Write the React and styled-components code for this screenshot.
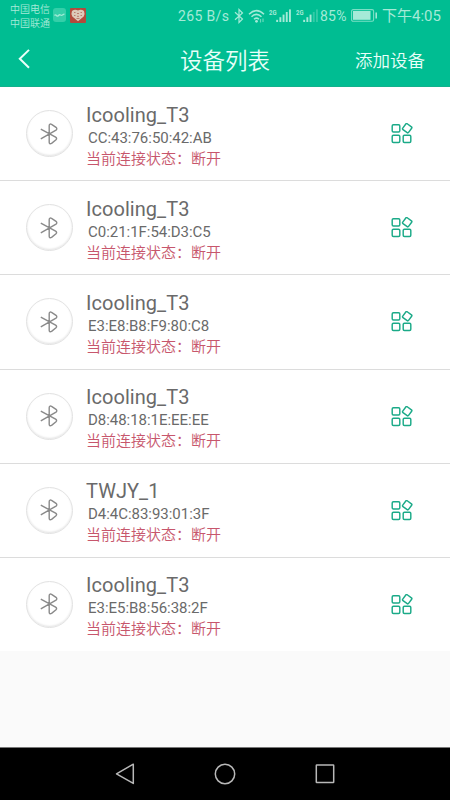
import React from "react";
import styled, { createGlobalStyle } from "styled-components";

const devices = [
    { name: 'Icooling_T3', mac: 'CC:43:76:50:42:AB' },
    { name: 'Icooling_T3', mac: 'C0:21:1F:54:D3:C5' },
    { name: 'Icooling_T3', mac: 'E3:E8:B8:F9:80:C8' },
    { name: 'Icooling_T3', mac: 'D8:48:18:1E:EE:EE' },
    { name: 'TWJY_1', mac: 'D4:4C:83:93:01:3F' },
    { name: 'Icooling_T3', mac: 'E3:E5:B8:56:38:2F' },
]


const Signal = ({ level }) => (

    <svg width="24" height="16" viewBox="0 0 24 16">
        <text x="0" y="6.8" fontSize="8" fontWeight="700" fontFamily="Roboto, sans-serif" textLength="7.5" lengthAdjust="spacingAndGlyphs" fill="#a5ead8">2G</text>
        {[0, 1, 2, 3, 4].map(i => (
            <rect key={i} x={7.2 + i * 3.2} y={11.8 - i * 2.6} width="1.9" height={2.2 + i * 2.6} fill="#a5ead8" opacity={i < level ? 1 : 0.3} />
        ))}
    </svg>

)


const App = () => {

    return (

        <>

            <GlobalStyle />

            <Screen>

                <StatusBar>

                    <Carriers>
                        <span>中国电信</span>
                        <span>中国联通</span>
                    </Carriers>

                    <Notices>
                        <svg width="13" height="14" viewBox="0 0 13 14">
                            <rect width="13" height="14" rx="3" fill="#34cfa9" />
                            <path d="M1.5 7.5q1-1.2 2 0t2 0t2-.5t2 0t2-.8" fill="none" stroke="#a0ead6" strokeWidth="1.3" />
                        </svg>
                        <svg width="16" height="15" viewBox="0 0 16 15">
                            <rect width="16" height="15" rx="1" fill="#b34a3c" />
                            <path d="M8 13.2L2.3 8.6Q.8 5.5 2 3Q4.8.7 8 2.4Q11.2.7 14 3Q15.2 5.5 13.7 8.6Z" fill="#dcc9b9" />
                            <path d="M4 4.5h1.5m1.5 1h2m1.5-1h1.5M4 7.5h1.5m1.5 .8h2m1.5-.8h1.5M6.5 10.5h3" stroke="#b57467" strokeWidth=".9" />
                        </svg>
                    </Notices>

                    <Speed>265 B/s</Speed>

                    <Indicators>
                        <svg width="10" height="16" viewBox="0 0 10 16">
                            <path d="M1 4.3L8.5 11L5 14.5V1.5L8.5 5L1 11.7" fill="none" stroke="#a5ead8" strokeWidth="1.2" />
                        </svg>
                        <svg width="17" height="14" viewBox="0 0 17 14">
                            <path d="M1 5.2Q8.5-2 16 5.2M3.5 7.7Q8.5 3 13.5 7.7M6 10.2Q8.5 8 11 10.2" fill="none" stroke="#a5ead8" strokeWidth="1.5" />
                            <circle cx="8.5" cy="12.3" r="1.4" fill="#a5ead8" />
                            <path d="M12.5 10v3.5M15 9.5v3.5" stroke="#66dabc" strokeWidth="1.2" />
                        </svg>
                    </Indicators>

                    <Signals>
                        <Signal level={5} />
                        <Signal level={3} />
                    </Signals>

                    <Percent>85%</Percent>

                    <Battery>
                        <svg width="27" height="13" viewBox="0 0 27 13">
                            <rect x=".6" y=".6" width="22" height="11.6" rx="1.5" fill="none" stroke="#7adfc5" strokeWidth="1.1" />
                            <rect x="2" y="2" width="17.5" height="8.8" fill="#a5ead8" />
                            <path d="M25.2 3.5v6" stroke="#a5ead8" strokeWidth="1.5" />
                        </svg>
                    </Battery>

                    <Clock>下午4:05</Clock>

                </StatusBar>

                <Header>

                    <BackButton aria-label="返回">
                        <svg width="12" height="20" viewBox="0 0 12 20">
                            <path d="M11 .9L1.8 9.7L11 18.8" fill="none" stroke="#e9fff9" strokeWidth="2" />
                        </svg>
                    </BackButton>

                    <Title>设备列表</Title>

                    <AddButton>添加设备</AddButton>

                </Header>

                <List>

                    {

                        devices.map((device, index) => (

                            <Row key={index}>

                                <Round>
                                    <svg width="18" height="22" viewBox="0 0 18 22">
                                        <path d="M.8 6.2L15.6 14.2Q17.4 15.4 16 16.8L11.6 20.4Q9.2 21.6 9.2 19.2V2.8Q9.2 .4 11.6 1.3L16 4.3Q17.6 5.8 16 7.1L.8 15.8" fill="none" stroke="#8a8a8a" strokeWidth="1.4" />
                                    </svg>
                                </Round>

                                <Info>
                                    <Name>{device.name}</Name>
                                    <Mac>{device.mac}</Mac>
                                    <State>当前连接状态：断开</State>
                                </Info>

                                <MenuButton aria-label="菜单">
                                    <svg width="22" height="21" viewBox="0 0 22 21">
                                        <g fill="none" stroke="#1baa88" strokeWidth="1.45">
                                            <rect x="1.2" y="1.7" width="7.6" height="7.2" rx="1.2" />
                                            <rect x="1.2" y="12.2" width="7.6" height="7.2" rx="1.2" />
                                            <rect x="12.2" y="12.2" width="7.6" height="7.2" rx="1.2" />
                                            <rect x="12.6" y="1.6" width="7.2" height="7.2" rx="1" transform="rotate(36 16.2 5.2)" />
                                        </g>
                                    </svg>
                                </MenuButton>

                            </Row>

                        ))

                    }

                </List>

                <NavBar>
                    <svg width="20" height="22" viewBox="0 0 20 22">
                        <path d="M18.3 1.2V20.4L1.5 10.8Z" fill="none" stroke="#b8b8b8" strokeWidth="1.5" strokeLinejoin="round" />
                    </svg>
                    <svg width="22" height="22" viewBox="0 0 22 22">
                        <circle cx="11" cy="11" r="9.7" fill="none" stroke="#b8b8b8" strokeWidth="1.5" />
                    </svg>
                    <svg width="20" height="22" viewBox="0 0 20 22">
                        <rect x="1.3" y="2" width="17.4" height="17.6" rx=".5" fill="none" stroke="#b8b8b8" strokeWidth="1.5" />
                    </svg>
                </NavBar>

            </Screen>

        </>

    )

}

const GlobalStyle = createGlobalStyle`

*{
box-sizing:border-box;
}

body{
margin:0;
font-family: Roboto, "Noto Sans CJK SC", sans-serif;
}

svg{
display:block;
flex-shrink:0;
}

`

const Screen = styled.div`

width:450px;
height:800px;
display:flex;
flex-direction:column;
background-color:#fafafa;
overflow:hidden;

`

const StatusBar = styled.div`

height:31px;
flex-shrink:0;
display:flex;
align-items:center;
background-color:#00bd92;
color:#a5ead8;
white-space:nowrap;

`

const Carriers = styled.div`

width:43px;
margin-left:10px;
padding-top:2px;
display:flex;
flex-direction:column;
font-size:10px;
line-height:14px;
font-weight:350;

`

const Notices = styled.div`

width:125px;
display:flex;
gap:4px;

`

const Speed = styled.div`

width:56px;
font-size:14px;
line-height:31px;
letter-spacing:0.35px;
padding-top:1px;

`

const Indicators = styled.div`

width:35px;
display:flex;
align-items:center;
gap:4px;

`

const Signals = styled.div`

width:51px;
display:flex;
gap:3px;

`

const Percent = styled.div`

width:31px;
font-size:14px;
letter-spacing:0.2px;

`

const Battery = styled.div`

width:31px;

`

const Clock = styled.div`

font-size:15px;
line-height:31px;
padding-top:2px;

`

const Header = styled.header`

height:56px;
flex-shrink:0;
display:grid;
grid-template-columns:minmax(0, 1fr) auto minmax(0, 1fr);
align-items:center;
background-color:#00bd92;
border-bottom:1px solid #12b18c;
color:#e9fff9;

`

const BackButton = styled.button`

margin-left:18px;
padding:0;
border:none;
background:none;
justify-self:start;
cursor:pointer;

`

const Title = styled.h1`

margin:0;
padding-top:5px;
font-size:22.5px;
line-height:34px;
font-weight:350;

`

const AddButton = styled.button`

margin-right:25px;
padding:4px 0 0;
border:none;
background:none;
justify-self:end;
color:inherit;
font-family:inherit;
font-size:17.5px;
line-height:26px;
font-weight:350;
white-space:nowrap;
cursor:pointer;

`

const List = styled.div`

height:564px;
flex-shrink:0;
display:grid;
grid-template-rows:repeat(5, 94.2px) 1fr;
background-color:#fff;

`

const Row = styled.div`

padding:0 37px 0 26px;
display:flex;
align-items:center;
border-bottom:1.5px solid #dcdcdc;

&:last-child{
border-bottom:none;
}

`

const Round = styled.div`

width:47px;
height:47px;
padding-right:1px;
display:flex;
align-items:center;
justify-content:center;
border:1px solid #e2e2e2;
border-radius:50%;
box-shadow:inset 0 -1px 2px #e4e4e4;

`

const Info = styled.div`

flex:1;
padding:3px 0 0 13px;
display:flex;
flex-direction:column;

`

const Name = styled.div`

font-size:20px;
line-height:26px;
letter-spacing:0.05px;
color:#6a6a6a;

`

const Mac = styled.div`

padding-left:2px;
font-size:15px;
line-height:20px;
letter-spacing:-0.03px;
color:#6a6a6a;

`

const State = styled.div`

padding-top:1px;
font-size:15px;
line-height:20px;
font-weight:350;
color:#c7566c;

`

const MenuButton = styled.button`

padding:0;
border:none;
background:none;
cursor:pointer;

`

const NavBar = styled.nav`

height:53px;
margin-top:auto;
flex-shrink:0;
display:flex;
align-items:center;
justify-content:center;
gap:79px;
background-color:#000;
border-top:1px solid #777;

`

export default App
